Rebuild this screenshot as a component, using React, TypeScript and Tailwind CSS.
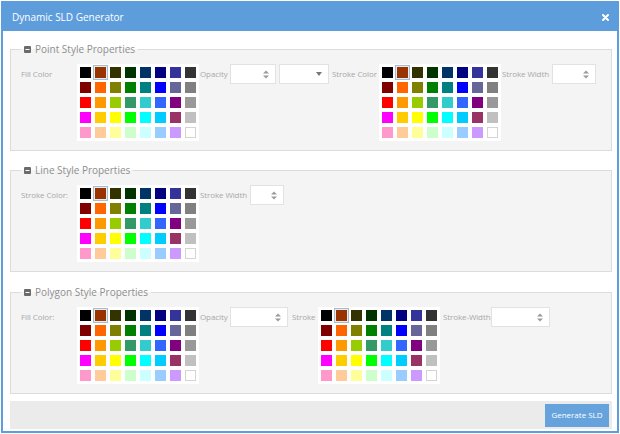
import React from 'react';

const PALETTE = [
    ['#000000', '#993300', '#333300', '#003300', '#003366', '#000080', '#333399', '#333333'],
    ['#800000', '#ff6600', '#808000', '#008000', '#008080', '#0000ff', '#666699', '#808080'],
    ['#ff0000', '#ff9900', '#99cc00', '#339966', '#33cccc', '#3366ff', '#800080', '#999999'],
    ['#ff00ff', '#ffcc00', '#ffff00', '#00ff00', '#00ffff', '#00ccff', '#993366', '#c0c0c0'],
    ['#ff99cc', '#ffcc99', '#ffff99', '#ccffcc', '#ccffff', '#99ccff', '#cc99ff', '#ffffff'],
];

function ColorPalette() {
    return (
        <div className="bg-white p-[1px] shrink-0">
            <div className="grid grid-cols-8">
                {PALETTE.flat().map((c, i) => (
                    <div
                        key={i}
                        className={`w-[15px] h-[15px] ${i === 1 ? 'border border-[#a9bccf] bg-[#e4ecf4] p-[1px]' : 'p-[2px]'}`}
                    >
                        <div
                            className={`w-[11px] h-[11px] ${c === '#ffffff' ? 'border border-[#d4d4d4]' : ''}`}
                            style={{ backgroundColor: c }}
                        />
                    </div>
                ))}
            </div>
        </div>
    );
}

function Spinner({ width }: { width: string }) {
    return (
        <div className={`${width} h-[20px] bg-white border border-[#e2e2e2] flex items-center justify-end pr-[6px] shrink-0`}>
            <svg width="6" height="9" viewBox="0 0 6 9">
                <path d="M0 3.5 L3 0.5 L6 3.5 Z" fill="#9a9a9a" />
                <path d="M0 5.5 L3 8.5 L6 5.5 Z" fill="#9a9a9a" />
            </svg>
        </div>
    );
}

function SelectBox() {
    return (
        <div className="w-[50px] h-[20px] bg-white border border-[#e2e2e2] flex items-center justify-end pr-[6px] shrink-0">
            <svg width="6" height="4" viewBox="0 0 6 4">
                <path d="M0 0 L6 0 L3 4 Z" fill="#777" />
            </svg>
        </div>
    );
}

function Label({ text, width }: { text: string; width: string }) {
    return (
        <div className={`${width} h-[20px] leading-[20px] text-[8px] tracking-[-0.1px] text-[#a8a8a8] whitespace-nowrap shrink-0`}>
            {text}
        </div>
    );
}

function Section({ title, className, children }: { title: string; className?: string; children: React.ReactNode }) {
    return (
        <fieldset className={`border border-[#dcdcdc] bg-[#f4f4f4] px-[10px] pb-[9px] ${className ?? ''}`}>
            <legend className="px-[3px] h-[14px] flex items-center gap-[4px] text-[10px] leading-[14px] text-[#8e8e8e]">
                <svg width="7" height="7" viewBox="0 0 7 7">
                    <rect x="0" y="0" width="7" height="7" rx="1" fill="#6b6b6b" />
                    <rect x="1.5" y="3" width="4" height="1" fill="#fff" />
                </svg>
                <span>{title}</span>
            </legend>
            <div className="pt-[8px] flex items-start">{children}</div>
        </fieldset>
    );
}

export default function App() {
    return (
        <div className="w-[620px] h-[434px] bg-white p-[1px]" style={{ fontFamily: '"Open Sans", sans-serif' }}>
            <div className="h-full border-2 border-[#5e9ddb] flex flex-col">
                {/* Header */}
                <div className="h-[28px] bg-[#5e9ddb] flex items-center justify-between pl-[9px] pr-[8px] shrink-0">
                    <span className="text-[10px] text-white">Dynamic SLD Generator</span>
                    <svg width="7" height="7" viewBox="0 0 7 7">
                        <path d="M1 1 L6 6 M6 1 L1 6" stroke="#fff" strokeWidth="2" strokeLinecap="round" />
                    </svg>
                </div>

                {/* Body */}
                <div className="pl-[7px] pr-[5px] pt-[11px] flex flex-col">
                    <Section title="Point Style Properties">
                        <Label text="Fill Color" width="w-[56px]" />
                        <ColorPalette />
                        <Label text="Opacity" width="w-[31px] pl-[1px]" />
                        <Spinner width="w-[46px]" />
                        <div className="w-[3px]" />
                        <SelectBox />
                        <div className="w-[3px]" />
                        <Label text="Stroke Color" width="w-[47px]" />
                        <ColorPalette />
                        <Label text="Stroke Width" width="w-[51px] pl-[1px]" />
                        <Spinner width="w-[44px]" />
                    </Section>

                    <Section title="Line Style Properties" className="mt-[12px]">
                        <Label text="Stroke Color:" width="w-[56px]" />
                        <ColorPalette />
                        <Label text="Stroke Width" width="w-[51px] pl-[1px]" />
                        <Spinner width="w-[34px]" />
                    </Section>

                    <Section title="Polygon Style Properties" className="mt-[13px]">
                        <Label text="Fill Color:" width="w-[56px]" />
                        <ColorPalette />
                        <Label text="Opacity" width="w-[31px] pl-[1px]" />
                        <Spinner width="w-[58px]" />
                        <div className="w-[4px]" />
                        <Label text="Stroke" width="w-[26px]" />
                        <ColorPalette />
                        <Label text="Stroke-Width" width="w-[51px] pl-[3px]" />
                        <Spinner width="w-[59px]" />
                    </Section>

                    {/* Footer */}
                    <div className="mt-[7px] h-[28px] bg-[#ebebeb] flex items-center justify-end pr-[3px]">
                        <button className="w-[64px] h-[23px] bg-[#66a3dd] text-white text-[8px]">Generate SLD</button>
                    </div>
                </div>
            </div>
        </div>
    );
}
